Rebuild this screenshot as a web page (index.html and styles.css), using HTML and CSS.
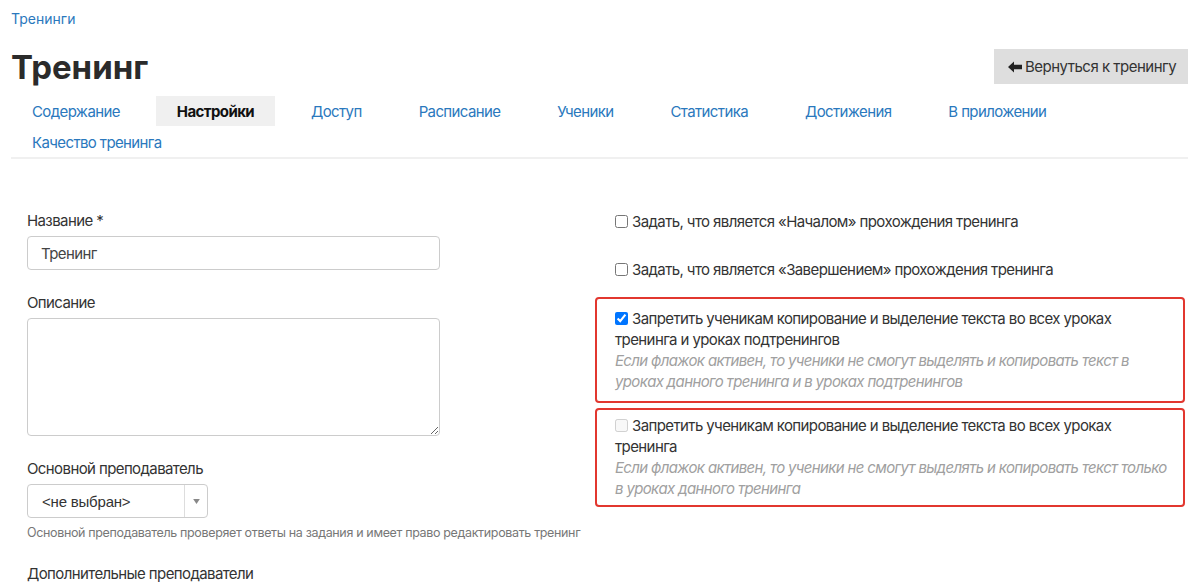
FILE: index.html
```html
<!DOCTYPE html>
<html lang="ru">
<head>
<meta charset="utf-8">
<title>Тренинг</title>
<link rel="stylesheet" href="styles.css">
</head>
<body>
<div class="page">
  <div class="breadcrumb"><a href="#">Тренинги</a></div>
  <div class="header">
    <h1>Тренинг</h1>
    <button class="back-btn" type="button"><svg class="arrow" viewBox="0 0 14 12" width="14" height="12"><path d="M0 6 L6 0.5 L6 3.8 L14 3.8 L14 8.2 L6 8.2 L6 11.5 Z" fill="#222"/></svg>Вернуться к тренингу</button>
  </div>
  <ul class="tabs">
    <li><a href="#">Содержание</a></li>
    <li class="active"><a href="#">Настройки</a></li>
    <li><a href="#">Доступ</a></li>
    <li><a href="#">Расписание</a></li>
    <li><a href="#">Ученики</a></li>
    <li><a href="#">Статистика</a></li>
    <li><a href="#">Достижения</a></li>
    <li><a href="#">В приложении</a></li>
    <li><a href="#">Качество тренинга</a></li>
  </ul>
  <div class="form">
    <div class="col-left">
      <div class="group">
        <label class="label">Название *</label>
        <input class="control" type="text" value="Тренинг">
      </div>
      <div class="group">
        <label class="label">Описание</label>
        <textarea class="control area"></textarea>
      </div>
      <div class="group">
        <label class="label">Основной преподаватель</label>
        <div class="select">
          <span class="select-text">&lt;не выбран&gt;</span>
          <span class="select-arrow"><svg viewBox="0 0 8 6" width="7" height="5"><path d="M0 0 L8 0 L4 6 Z" fill="#888"/></svg></span>
        </div>
        <div class="help">Основной преподаватель проверяет ответы на задания и имеет право редактировать тренинг</div>
      </div>
      <div class="group">
        <label class="label">Дополнительные преподаватели</label>
      </div>
    </div>
    <div class="col-right">
      <label class="check plain"><input type="checkbox"><span>Задать, что является «Началом» прохождения тренинга</span></label>
      <label class="check plain second"><input type="checkbox"><span>Задать, что является «Завершением» прохождения тренинга</span></label>
      <div class="boxed first-box">
        <label class="check"><input type="checkbox" checked><span>Запретить ученикам копирование и выделение текста во всех уроках тренинга и уроках подтренингов</span></label>
        <div class="note">Если флажок активен, то ученики не смогут выделять и копировать текст в уроках данного тренинга и в уроках подтренингов</div>
      </div>
      <div class="boxed second-box">
        <label class="check"><input type="checkbox" disabled><span>Запретить ученикам копирование и выделение текста во всех уроках тренинга</span></label>
        <div class="note">Если флажок активен, то ученики не смогут выделять и копировать текст только в уроках данного тренинга</div>
      </div>
    </div>
  </div>
</div>
</body>
</html>
```

FILE: styles.css
```css
* { box-sizing: border-box; }
html, body { margin: 0; padding: 0; background: #fff; }
body {
  font-family: Inter, "Noto Sans", sans-serif;
  font-size: 15px;
  line-height: 21px;
  color: #333;
  letter-spacing: -0.6px;
  overflow: hidden;
}
a { color: #2a78bd; text-decoration: none; }
.page { width: 1200px; padding: 0 12px 0 11px; }

.breadcrumb { padding-top: 8px; font-size: 14px; line-height: 21px; letter-spacing: 0; }

.header {
  display: flex;
  justify-content: space-between;
  align-items: center;
  margin-top: 20px;
  height: 35px;
}
.header h1 {
  margin: 0;
  font-size: 33px;
  line-height: 36px;
  font-weight: 700;
  color: #2b2b2b;
  letter-spacing: 0;
}
.back-btn {
  font-family: Inter, "Noto Sans", sans-serif;
  font-size: 15px;
  color: #333;
  background: #dedede;
  border: 0;
  height: 35px;
  width: 194px;
  padding: 0 0 0 14px;
  display: flex;
  align-items: center;
  gap: 3px;
  letter-spacing: -0.5px;
}
.arrow { display: block; }

.tabs {
  list-style: none;
  margin: 12px 0 0 0;
  padding: 0;
  display: flex;
  flex-wrap: wrap;
  column-gap: 15px;
  row-gap: 1px;
  border-bottom: 2px solid #f0f0f0;
}
.tabs li a {
  display: block;
  padding: 1px 21px 0;
  line-height: 29px;
  height: 30px;
  font-size: 15px;
  letter-spacing: -0.62px;
}
.tabs li.active a {
  background: #f0f0f0;
  color: #111;
  font-weight: 700;
  letter-spacing: -0.6px;
}

.form {
  display: flex;
  padding-top: 51px;
}
.col-left { width: 584px; padding-left: 16px; }
.col-right { width: 590px; }

.group { margin-bottom: 22px; }
.label { display: block; margin-bottom: 5px; color: #333; }
.control {
  display: block;
  width: 413px;
  height: 34px;
  border: 1px solid #ccc;
  border-radius: 4px;
  padding: 0 13px;
  font-family: Inter, "Noto Sans", sans-serif;
  font-size: 15px;
  letter-spacing: -0.6px;
  color: #444;
  background: #fff;
}
.area { height: 118px; resize: vertical; }
.select {
  width: 181px;
  height: 34px;
  border: 1px solid #ccc;
  border-radius: 4px;
  display: flex;
  align-items: center;
}
.select-text {
  flex: 1;
  padding-left: 14px;
  font-family: "Liberation Sans", Arial, sans-serif;
  font-size: 15px;
  letter-spacing: -0.2px;
  color: #333;
}
.select-arrow {
  width: 23px;
  height: 32px;
  border-left: 1px solid #ddd;
  display: flex;
  align-items: center;
  justify-content: center;
}
.select-arrow svg { display: block; }
.help {
  margin-top: 6px;
  font-size: 12.5px;
  line-height: 17px;
  color: #777;
  letter-spacing: -0.35px;
}

.check {
  display: flex;
  align-items: flex-start;
}
.check input {
  margin: 4px 4px 0 0;
  width: 13px;
  height: 13px;
  flex: none;
}
.check span { display: block; }
.check.plain { padding-left: 20px; margin-top: 1px; }
.check.plain.second { margin-top: 27px; }

.boxed {
  border: 2px solid #e2372f;
  border-radius: 4px;
  padding: 9px 10px 9px 18px;
}
.first-box { margin-top: 17px; }
.second-box { margin-top: 5px; padding-top: 5px; padding-bottom: 6px; }
.boxed .check { display: block; }
.boxed .check input { vertical-align: -1px; margin: 0 4px 0 0; }
.boxed .check span { display: inline; }
.note {
  font-style: italic;
  color: #a0a0a0;
  letter-spacing: -0.65px;
}
```
